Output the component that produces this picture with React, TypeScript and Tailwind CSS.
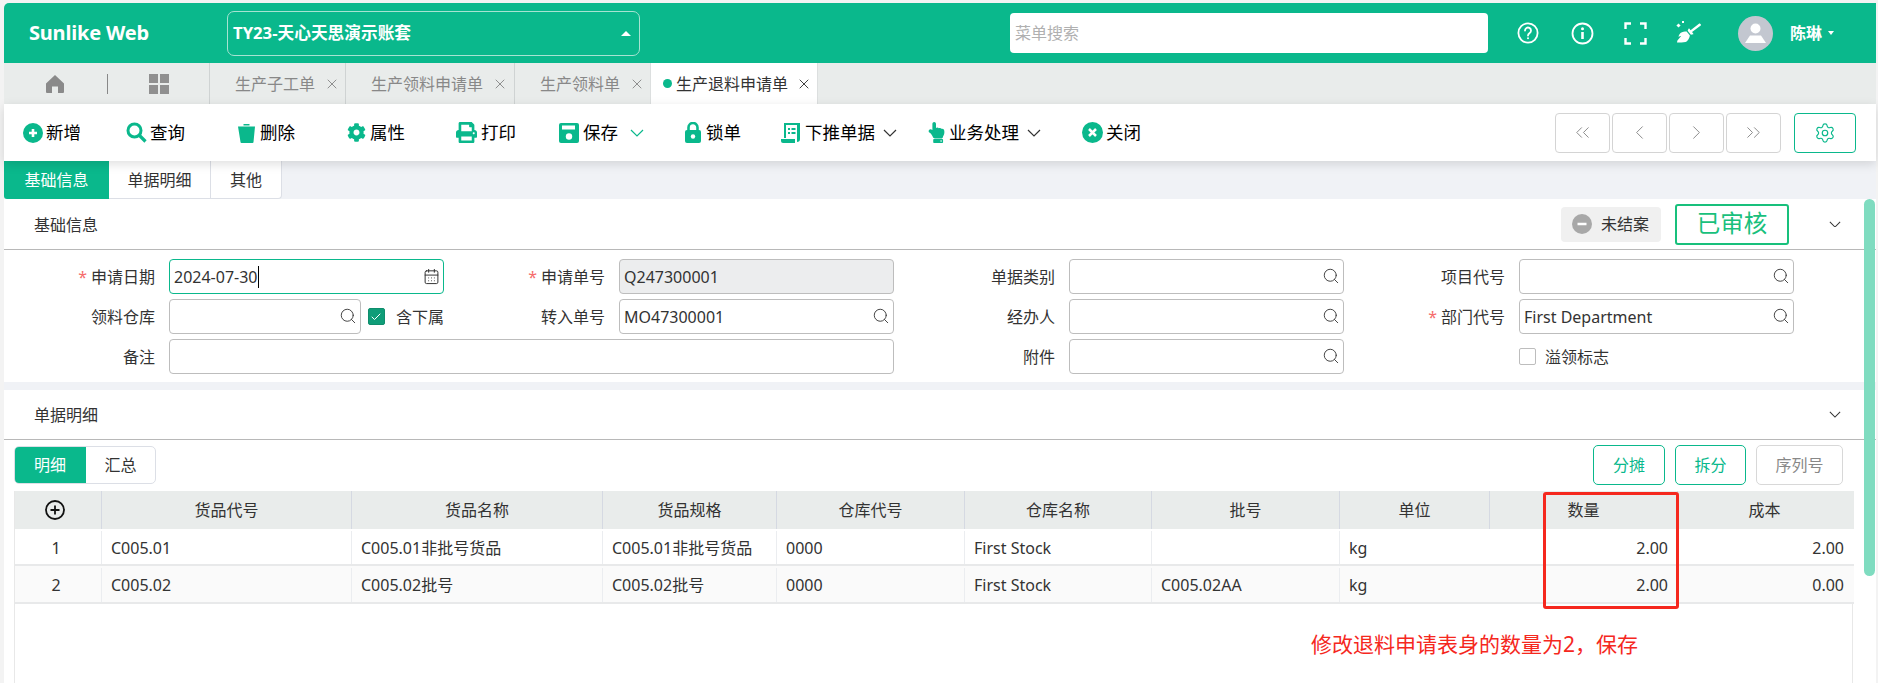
import React from "react";
import { ChevronsLeft, ChevronLeft, ChevronRight, ChevronsRight, Settings, Search, CalendarDays, X, Check } from "lucide-react";
import { FaCog, FaPrint, FaHandPointUp, FaBroom } from "react-icons/fa";

const Chev = ({ cls, color = "#333", w = 14 }: { cls?: string; color?: string; w?: number }) => (
  <svg className={cls} width={w} height={(w * 8) / 14} viewBox="0 0 14 8" fill="none" stroke={color} strokeWidth="1.2"><path d="M1 1l6 6 6-6" /></svg>
);

const Q = () => <Search size={18} strokeWidth={1.2} className="absolute right-[3px] top-[7px] text-[#333]" />;

function TI({ className, icon, children, chev, chevColor }: { className: string; icon: React.ReactNode; children: string; chev?: string; chevColor?: string }) {
  return (
    <div className={"flex items-center shrink-0 " + className}>
      {icon}
      <span className="text-[17.5px] leading-none text-black whitespace-nowrap">{children}</span>
      {chev && <Chev cls={chev} color={chevColor} />}
    </div>
  );
}

const Lab = ({ t, req }: { t: string; req?: boolean }) => (
  <div className="flex items-center justify-end pr-[14px] text-[16px] text-[#333] whitespace-nowrap">
    {req && <span className="text-[#f56c6c] mr-[4px]">*</span>}
    {t}
  </div>
);

const Inp = ({ v, q, cls }: { v?: string; q?: boolean; cls?: string }) => (
  <div className={"relative h-[35px] rounded-[4px] border border-[#bdbdbd] flex items-center px-[4px] text-[16px] text-[#333] " + (cls || "bg-white")}>
    {v}
    {q && <Q />}
  </div>
);

const heads = ["货品代号", "货品名称", "货品规格", "仓库代号", "仓库名称", "批号", "单位", "数量", "成本"];
const widths = ["w-[86px]", "w-[250px]", "w-[251px]", "w-[174px]", "w-[188px]", "w-[187px]", "w-[188px]", "w-[150px]", "w-[188px]", "w-[174px]"];
const rows = [
  ["1", "C005.01", "C005.01非批号货品", "C005.01非批号货品", "0000", "First Stock", "", "kg", "2.00", "2.00"],
  ["2", "C005.02", "C005.02批号", "C005.02批号", "0000", "First Stock", "C005.02AA", "kg", "2.00", "0.00"],
];

function Tab({ t, cls }: { t: string; cls: string }) {
  return (
    <div className={"flex items-center h-full border-l border-[#cfd3d3] text-[16px] text-[#888] shrink-0 " + cls}>
      <span className="whitespace-nowrap">{t}</span>
      <X size={16} strokeWidth={1.2} className="ml-[9px] text-[#777]" />
    </div>
  );
}

export default function App() {
  return (
    <div className="relative w-[1878px] h-[683px] overflow-hidden bg-[#f3f3f3] pt-[3px] pl-[4px] pr-[2px] font-['Noto_Sans','Noto_Sans_CJK_SC',sans-serif]">
      {/* header */}
      <div className="flex items-center h-[60px] bg-[#0ab88c] rounded-tl-[5px] text-white">
        <div className="ml-[25px] w-[198px] text-[20px] font-bold leading-none tracking-[-0.2px]">Sunlike Web</div>
        <div className="flex items-center justify-between w-[413px] h-[45px] rounded-[7px] border border-[#a6e3d2] pl-[5px] pr-[8px] text-[16.7px] font-bold">
          <span>TY23-天心天思演示账套</span>
          <span className="w-0 h-0 border-x-[5px] border-x-transparent border-b-[5px] border-b-white" />
        </div>
        <div className="ml-[370px] w-[478px] h-[40px] bg-white rounded-[4px] flex items-center pl-[5px] text-[16px] text-[#b0b0b0]">菜单搜索</div>
        <div className="ml-[29px] flex items-center">
          <svg width="22" height="22" viewBox="0 0 22 22" fill="none" stroke="white" strokeWidth="1.8"><circle cx="11" cy="11" r="9.6" /><path d="M8 8.5a3 3 0 1 1 4.7 2.5c-1.1.8-1.7 1.3-1.7 2.6" strokeLinecap="round" /><circle cx="11" cy="16.3" r="1" fill="white" stroke="none" /></svg>
          <svg className="ml-[32px]" width="23" height="23" viewBox="0 0 23 23" fill="none" stroke="white" strokeWidth="1.8"><circle cx="11.5" cy="11.5" r="10" /><path d="M11.5 10v7" strokeWidth="2.6" /><circle cx="11.5" cy="6.8" r="1.5" fill="white" stroke="none" /></svg>
          <svg className="ml-[30px]" width="23" height="23" viewBox="0 0 23 23" fill="none" stroke="white" strokeWidth="2.4"><path d="M1.5 7V1.5H7M16 1.5h5.5V7M21.5 16v5.5H16M7 21.5H1.5V16" /></svg>
          <div className="relative ml-[30px] w-[24px] h-[24px]">
            <FaBroom size={24} className="text-white" />
            <span className="absolute left-[0px] top-[3px] w-[3px] h-[3px] bg-white rotate-45" />
            <span className="absolute left-[5px] top-[0px] w-[2px] h-[2px] bg-white" />
          </div>
          <div className="ml-[37px] w-[35px] h-[35px] rounded-full bg-[#c3c7d0] flex items-center justify-center">
            <svg width="23" height="23" viewBox="0 0 23 23" fill="white"><circle cx="11.5" cy="6.5" r="5" /><path d="M1 21l5-7.5h11l5 7.500z" /></svg>
          </div>
          <span className="ml-[17px] text-[16px] font-bold whitespace-nowrap">陈琳</span>
          <span className="ml-[6px] w-0 h-0 border-x-[3.5px] border-x-transparent border-t-[4px] border-t-white" />
        </div>
      </div>

      {/* page tabs */}
      <div className="flex items-stretch h-[41px] bg-[#e9eceb]">
        <div className="w-[103px] flex items-center pl-[41px]">
          <svg width="20" height="20" viewBox="0 0 20 20" fill="#8a8a8a"><path d="M10 1 L19 9.5 V18 a1 1 0 0 1-1 1 H13 V12.500 H7 V19 H2 a1 1 0 0 1-1-1 V9.500 Z" /></svg>
        </div>
        <div className="self-center h-[20px] w-px bg-[#888]" />
        <div className="w-[101px] flex items-center pl-[41px]">
          <div className="grid grid-cols-2 gap-[2px]">
            <span className="w-[9px] h-[9px] bg-[#909090]" />
            <span className="w-[9px] h-[9px] bg-[#909090]" />
            <span className="w-[9px] h-[9px] bg-[#909090]" />
            <span className="w-[9px] h-[9px] bg-[#909090]" />
          </div>
        </div>
        <Tab t="生产子工单" cls="w-[136px] pl-[25px]" />
        <Tab t="生产领料申请单" cls="w-[169px] pl-[25px]" />
        <Tab t="生产领料单" cls="w-[136px] pl-[25px]" />
        <div className="flex items-center w-[168px] h-full bg-white border-x border-[#dcdfdf] pl-[12px] text-[16px] text-[#333]">
          <span className="w-[9px] h-[9px] rounded-full bg-[#0ab88c] mr-[4px]" />
          <span className="whitespace-nowrap">生产退料申请单</span>
          <X size={16} strokeWidth={1.4} className="ml-[8px] text-[#333]" />
        </div>
      </div>

      {/* toolbar */}
      <div className="relative z-10 flex items-center h-[57px] bg-white shadow-[0_3px_10px_rgba(0,0,0,0.13)]">
        <TI className="ml-[19px] gap-[3px]" icon={<svg width="20" height="20" viewBox="0 0 20 20"><circle cx="10" cy="10" r="10" fill="#0ab88c" /><path d="M10 6v8M6 10h8" stroke="white" strokeWidth="2.6" /></svg>}>新增</TI>
        <TI className="ml-[45px] gap-[3px]" icon={<svg width="21" height="21" viewBox="0 0 21 21" fill="none" stroke="#0ab88c"><circle cx="8.500" cy="8.500" r="6.500" strokeWidth="3" /><path d="M13 13l6.500 6.500" strokeWidth="3.2" /></svg>}>查询</TI>
        <TI className="ml-[53px] gap-[5px]" icon={<svg width="17" height="21" viewBox="0 0 17 21" fill="#0ab88c"><path d="M5.500 2h6v1.500h-6z" /><path d="M0 4.500h17l-1.500 15.500a1 1 0 0 1-1 1h-11a1 1 0 0 1-1-1z" /></svg>}>删除</TI>
        <TI className="ml-[52px] gap-[4px]" icon={<FaCog size={19} color="#0ab88c" />}>属性</TI>
        <TI className="ml-[51px] gap-[4px]" icon={<FaPrint size={21} color="#0ab88c" />}>打印</TI>
        <TI className="ml-[43px] gap-[4px]" chev="ml-[8px]" chevColor="#0ab88c" icon={<svg width="20" height="20" viewBox="0 0 20 20"><rect width="20" height="20" rx="2" fill="#0ab88c" /><rect x="3" y="2.500" width="13" height="4" fill="white" /><circle cx="10" cy="13.500" r="3.200" fill="white" /></svg>}>保存</TI>
        <TI className="ml-[41px] gap-[5px]" icon={<svg width="16" height="21" viewBox="0 0 16 21"><path d="M3.500 9V5.500a4.500 4.500 0 0 1 9 0V9" fill="none" stroke="#0ab88c" strokeWidth="2.6" /><rect y="8" width="16" height="13" rx="2" fill="#0ab88c" /><circle cx="8" cy="14.500" r="2.200" fill="white" /></svg>}>锁单</TI>
        <TI className="ml-[40px] gap-[5px]" chev="ml-[3px]" icon={<svg width="19" height="20" viewBox="0 0 19 20"><path d="M3 0h16v16a3 3 0 0 1-3 3V2H5v13H3z" fill="#0ab88c" /><path d="M7 5h2v2H7zM10.500 5h4v2h-4zM7 9h2v2H7zM10.500 9h4v2h-4z" fill="#0ab88c" /><path d="M0 16h14v4H2a2 2 0 0 1-2-2z" fill="#0ab88c" /></svg>}>下推单据</TI>
        <TI className="ml-[29px] gap-[2px]" chev="ml-[6px]" icon={<FaHandPointUp size={21} color="#0ab88c" />}>业务处理</TI>
        <TI className="ml-[41px] gap-[3px]" icon={<svg width="21" height="21" viewBox="0 0 21 21"><circle cx="10.500" cy="10.500" r="10.500" fill="#0ab88c" /><path d="M7 7l7 7M14 7l-7 7" stroke="white" strokeWidth="2.500" /></svg>}>关闭</TI>

        <div className="ml-auto flex items-center gap-[2px]">
          {[ChevronsLeft, ChevronLeft, ChevronRight, ChevronsRight].map((I, i) => (
            <div key={i} className="w-[55px] h-[40px] rounded-[4px] border border-[#d4d4d4] flex items-center justify-center">
              <I size={23} strokeWidth={1} className="text-[#888]" />
            </div>
          ))}
        </div>
        <div className="ml-[13px] mr-[20px] w-[62px] h-[40px] rounded-[4px] border border-[#0ab88c] flex items-center justify-center">
          <Settings size={22} strokeWidth={1.3} className="text-[#0ab88c]" />
        </div>
      </div>

      {/* content */}
      <div className="bg-[#f0f2f6] h-[522px]">
        <div className="flex h-[38px]">
          <div className="w-[105px] flex items-center justify-center bg-[#0ab88c] text-white text-[16px] rounded-bl-[3px]">基础信息</div>
          <div className="w-[102px] flex items-center justify-center bg-white text-[#333] text-[16px] border-r border-b border-[#dcdfe6]">单据明细</div>
          <div className="w-[71px] flex items-center justify-center bg-white text-[#333] text-[16px] border-r border-b border-[#dcdfe6] rounded-br-[4px]">其他</div>
        </div>

        {/* basic info */}
        <section className="bg-white h-[183px]">
          <div className="flex items-center h-[51px] border-b border-[#b8b8b8] pl-[30px] text-[16px] text-[#333]">
            <span className="pt-[2px]">基础信息</span>
            <div className="ml-auto flex items-center gap-[10px] h-[35px] w-[100px] rounded-[4px] bg-[#f0f0f0] pl-[11px] text-[16px] text-[#333]">
              <svg className="-mr-[1px]" width="20" height="20" viewBox="0 0 20 20"><circle cx="10" cy="10" r="10" fill="#a8a8a8" /><path d="M5.500 10h9" stroke="white" strokeWidth="2.500" /></svg>
              <span className="whitespace-nowrap">未结案</span>
            </div>
            <div className="ml-[14px] w-[114px] h-[41px] rounded-[3px] border-2 border-[#18c07c] flex items-center justify-center text-[23.5px] text-[#18c07c] whitespace-nowrap">已审核</div>
            <Chev w={12} cls="ml-[40px] mr-[35px]" />
          </div>
          <div className="grid grid-cols-[165px_275px_175px_275px_175px_275px_175px_275px] auto-rows-[35px] gap-y-[5px] pt-[9px]">
            <Lab t="申请日期" req />
            <div className="relative h-[35px] rounded-[4px] border border-[#0ab88c] flex items-center px-[4px] text-[16px] text-[#333]">
              2024-07-30<span className="w-px h-[22px] bg-black" />
              <CalendarDays size={17} strokeWidth={1.4} className="absolute right-[3px] top-[8px] text-[#333]" />
            </div>
            <Lab t="申请单号" req />
            <Inp v="Q247300001" cls="bg-[#ecedee]" />
            <Lab t="单据类别" />
            <Inp q />
            <Lab t="项目代号" />
            <Inp q />

            <Lab t="领料仓库" />
            <div className="flex items-center">
              <Inp q cls="bg-white w-[192px] shrink-0" />
              <div className="ml-[7px] w-[17px] h-[17px] rounded-[2px] bg-[#0f9d78] border border-[#0f8d6c] flex items-center justify-center">
                <Check size={12} strokeWidth={2} className="text-white" />
              </div>
              <span className="ml-[11px] text-[16px] text-[#333] whitespace-nowrap">含下属</span>
            </div>
            <Lab t="转入单号" />
            <Inp v="MO47300001" q />
            <Lab t="经办人" />
            <Inp q />
            <Lab t="部门代号" req />
            <Inp v="First Department" q />

            <Lab t="备注" />
            <Inp cls="bg-white col-span-3" />
            <Lab t="附件" />
            <Inp q />
            <div />
            <div className="flex items-center">
              <span className="w-[17px] h-[17px] rounded-[2px] border border-[#bdbdbd] bg-white" />
              <span className="ml-[9px] text-[16px] text-[#333] whitespace-nowrap">溢领标志</span>
            </div>
          </div>
        </section>

        {/* detail */}
        <section className="mt-[8px] bg-white h-[293px]">
          <div className="flex items-center justify-between h-[50px] border-b border-[#b8b8b8] pl-[30px] text-[16px] text-[#333]">
            <span>单据明细</span>
            <Chev w={12} cls="mr-[35px]" />
          </div>
          <div className="flex items-center justify-between h-[51px] pl-[10px] pb-[2px]">
            <div className="flex h-[38px] w-[142px] rounded-[5px] border border-[#dcdfe6] text-[16px] overflow-hidden">
              <div className="w-[72px] -ml-px -my-px bg-[#0ab88c] text-white flex items-center justify-center">明细</div>
              <div className="flex-1 flex items-center justify-center text-[#333]">汇总</div>
            </div>
            <div className="flex gap-[10px] mr-[33px] text-[16px]">
              <div className="w-[72px] h-[40px] rounded-[5px] border border-[#0ab88c] text-[#0ab88c] flex items-center justify-center">分摊</div>
              <div className="w-[71px] h-[40px] rounded-[5px] border border-[#0ab88c] text-[#0ab88c] flex items-center justify-center">拆分</div>
              <div className="w-[87px] h-[40px] rounded-[5px] border border-[#d8d8d8] text-[#888] flex items-center justify-center">序列号</div>
            </div>
          </div>
          <div className="ml-[10px] w-[1839px] h-[192px] border-x border-[#e8e8e8]">
            <div className="flex h-[38px] bg-[#e9eceb] text-[16px] text-[#333] w-[1839px]">
              <div className={widths[0] + " flex items-center justify-center shrink-0 pr-[6px]"}>
                <svg width="20" height="20" viewBox="0 0 20 20" fill="none" stroke="#111" strokeWidth="1.8"><circle cx="10" cy="10" r="9" /><path d="M10 5.500v9M5.500 10h9" /></svg>
              </div>
              {heads.map((h, i) => (
                <div key={h} className={widths[i + 1] + " shrink-0 flex items-center justify-center border-l border-[#d5d9e2]"}>{h}</div>
              ))}
            </div>
            {rows.map((r, ri) => (
              <div key={ri} className={"flex border-b-2 border-[#e8e9ea] text-[16px] text-[#333] pt-[2px] w-[1839px] " + (ri === 1 ? "h-[38px] bg-[#fafafa]" : "h-[37px] bg-white")}>
                {r.map((c, i) => (
                  <div key={i} className={widths[i] + " shrink-0 flex items-center whitespace-nowrap " + (i === 0 ? "justify-center pr-[4px] " : i === 8 ? "justify-end pr-[9px] " : i === 9 ? "justify-end pr-[7px] " : "border-l border-[#ebedf0] pl-[9px] ")}>{c}</div>
                ))}
              </div>
            ))}
          </div>
        </section>
      </div>

      {/* scrollbar */}
      <div className="absolute left-[1864px] top-[199px] w-[11px] h-[377px] rounded-[6px] bg-[#7fdcc0]" />
      {/* annotation */}
      <div className="absolute left-[1543px] top-[492px] w-[136px] h-[117px] rounded-[3px] border-[3px] border-[#f5281e]" />
      <div className="absolute left-[1311px] top-[629px] text-[21px] leading-[30px] text-[#f5281e] whitespace-nowrap">修改退料申请表身的数量为2，保存</div>
    </div>
  );
}
